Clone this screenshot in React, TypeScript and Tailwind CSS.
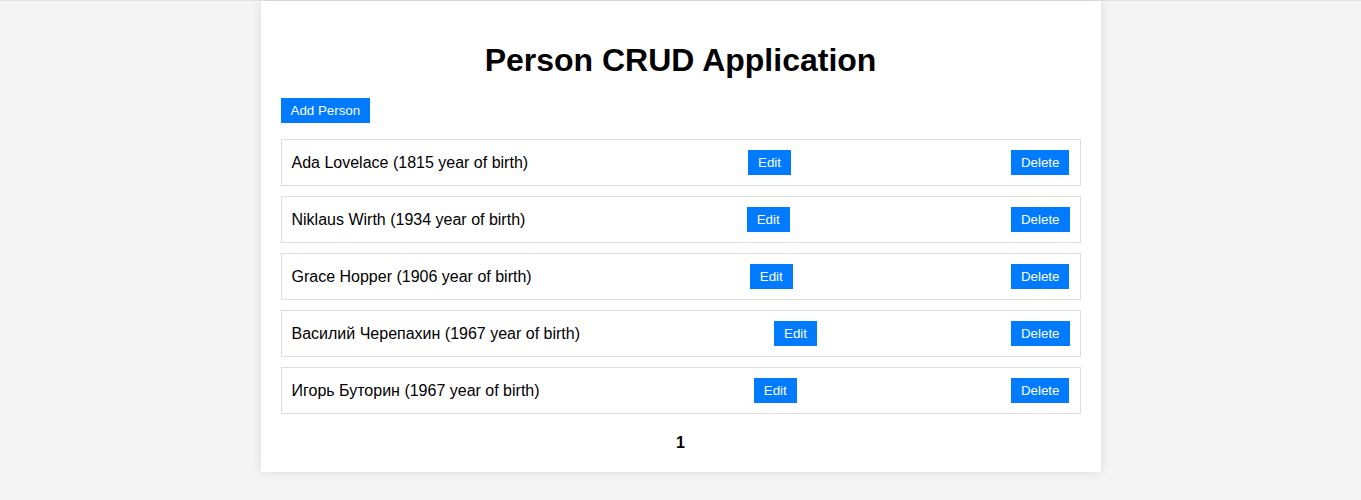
import React from "react";

const people = [
  { name: "Ada Lovelace", year: 1815 },
  { name: "Niklaus Wirth", year: 1934 },
  { name: "Grace Hopper", year: 1906 },
  { name: "Василий Черепахин", year: 1967 },
  { name: "Игорь Буторин", year: 1967 },
];

const btn =
  "bg-[#007bff] text-white text-[13.333px] leading-[15px] px-[10px] py-[5px] cursor-pointer";

export default function App() {
  return (
    <div
      className="min-h-[500px] bg-[#f4f4f4] border-t border-[#e2e2e2]"
      style={{ fontFamily: '"Liberation Sans", Arial, sans-serif' }}
    >
      <div className="w-[840px] mx-auto bg-white p-5 shadow-[0_0_10px_rgba(0,0,0,0.1)]">
        <h1 className="text-[32px] leading-[37px] font-bold text-center text-black mt-[21px] mb-[19px]">
          Person CRUD Application
        </h1>
        <button className={btn}>Add Person</button>
        <ul className="mt-4">
          {people.map((p) => (
            <li
              key={p.name}
              className="flex items-center justify-between border border-[#ddd] p-[10px] mb-[10px] text-base leading-[18px] text-black"
            >
              <span>
                {p.name} ({p.year} year of birth)
              </span>
              <button className={btn}>Edit</button>
              <button className={btn}>Delete</button>
            </li>
          ))}
        </ul>
        <div className="mt-[20px] text-center font-bold text-base leading-[18px] text-black">
          1
        </div>
      </div>
    </div>
  );
}
